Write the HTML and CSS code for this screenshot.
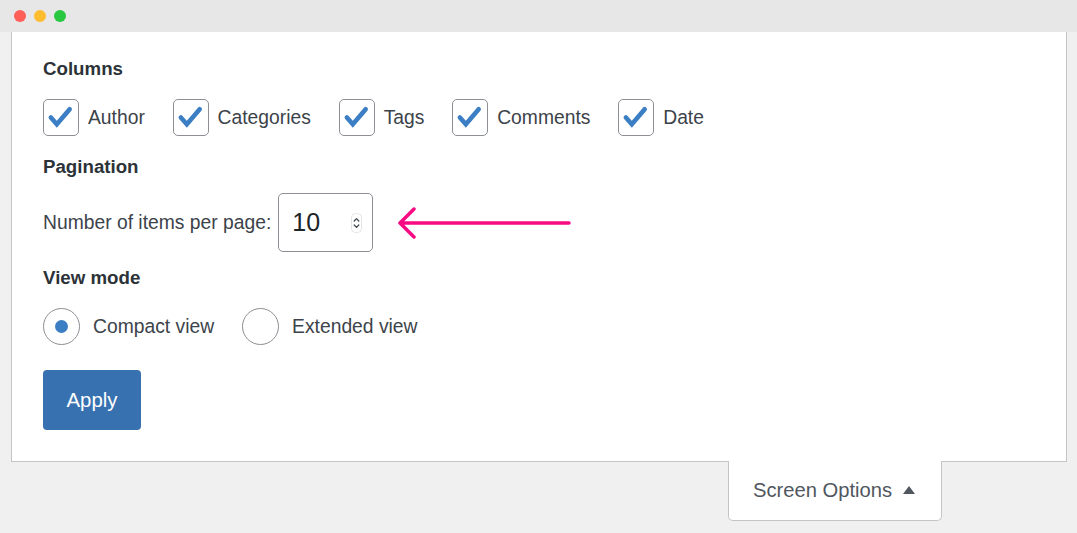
FILE: index.html
```html
<!DOCTYPE html>
<html lang="en">
<head>
<meta charset="utf-8">
<title>Screen Options</title>
<link rel="stylesheet" href="styles.css">
</head>
<body>
<div class="window">
  <div class="titlebar">
    <span class="dot red"></span>
    <span class="dot yellow"></span>
    <span class="dot green"></span>
  </div>
  <div class="stage">
    <div class="panel">
      <h5 class="legend">Columns</h5>
      <div class="checks">
        <label class="check"><span class="box"><svg viewBox="0 0 36 36"><path d="M7.5 18.5 L14 26 L28 9.5" /></svg></span>Author</label>
        <label class="check"><span class="box"><svg viewBox="0 0 36 36"><path d="M7.5 18.5 L14 26 L28 9.5" /></svg></span>Categories</label>
        <label class="check"><span class="box"><svg viewBox="0 0 36 36"><path d="M7.5 18.5 L14 26 L28 9.5" /></svg></span>Tags</label>
        <label class="check"><span class="box"><svg viewBox="0 0 36 36"><path d="M7.5 18.5 L14 26 L28 9.5" /></svg></span>Comments</label>
        <label class="check"><span class="box"><svg viewBox="0 0 36 36"><path d="M7.5 18.5 L14 26 L28 9.5" /></svg></span>Date</label>
      </div>
      <h5 class="legend legend-pag">Pagination</h5>
      <div class="perpage">
        <span class="perpage-label">Number of items per page:</span>
        <div class="number">
          <span class="number-value">10</span>
          <svg class="spinner" width="11" height="20" viewBox="0 0 11 20">
            <rect x="0.5" y="0.5" width="10" height="19" rx="4" fill="#fff" stroke="#e4e4e6"/>
            <path d="M3.2 8 L5.5 5.6 L7.8 8" fill="none" stroke="#3c434a" stroke-width="1.2" stroke-linecap="round" stroke-linejoin="round"/>
            <path d="M3.2 12 L5.5 14.4 L7.8 12" fill="none" stroke="#3c434a" stroke-width="1.2" stroke-linecap="round" stroke-linejoin="round"/>
          </svg>
        </div>
        <svg class="arrow" width="175" height="36" viewBox="0 0 175 36">
          <path d="M2 18 H171 M2 18 L16 4 M2 18 L16 32" fill="none" stroke="#f80a83" stroke-width="3.5" stroke-linecap="round" stroke-linejoin="round"/>
        </svg>
      </div>
      <h5 class="legend legend-view">View mode</h5>
      <div class="radios">
        <label class="radio"><span class="circle checked"></span>Compact view</label>
        <label class="radio"><span class="circle"></span>Extended view</label>
      </div>
      <div class="actions">
        <button class="apply" type="button">Apply</button>
      </div>
    </div>
    <div class="tabrow">
      <div class="tab">Screen Options <span class="tri"></span></div>
    </div>
  </div>
</div>
</body>
</html>
```

FILE: styles.css
```css
* { box-sizing: border-box; }

html, body {
  margin: 0;
  padding: 0;
}

body {
  background: #f0f0f1;
  font-family: "Liberation Sans", Arial, sans-serif;
  color: #3c434a;
  width: 1077px;
  height: 533px;
  overflow: hidden;
}

.window {
  display: flex;
  flex-direction: column;
  height: 533px;
}

.titlebar {
  height: 32px;
  background: #e7e7e7;
  display: flex;
  align-items: center;
  gap: 7px;
  padding-left: 14px;
  padding-bottom: 1px;
}

.dot {
  width: 12px;
  height: 12px;
  border-radius: 50%;
  display: block;
}
.dot + .dot { margin-left: 1px; }
.red { background: #fe5f57; }
.yellow { background: #febc2e; }
.green { background: #28c840; }

.stage {
  padding: 0 10px 0 11px;
  display: flex;
  flex-direction: column;
}

.panel {
  background: #fff;
  border: 1px solid #c3c4c7;
  border-top: none;
  padding: 25px 30px 31px 31px;
  height: 430px;
  display: flex;
  flex-direction: column;
  align-items: flex-start;
}

.legend {
  margin: 0;
  font-size: 18.7px;
  font-weight: 700;
  line-height: 24px;
  color: #2c3338;
}

.checks {
  display: flex;
  margin-top: 18px;
  gap: 27.8px;
}

.check {
  display: flex;
  align-items: center;
  gap: 9px;
  font-size: 19.3px;
  line-height: 37px;
}

.box {
  width: 36px;
  height: 37px;
  border: 1.5px solid #8c8f94;
  border-radius: 5px;
  background: #fff;
  display: block;
}

.box svg {
  width: 33px;
  height: 34px;
  display: block;
}

.box svg path {
  fill: none;
  stroke: #3b7ec4;
  stroke-width: 5;
  stroke-linecap: round;
  stroke-linejoin: miter;
}

.legend-pag { margin-top: 19px; }

.perpage {
  display: flex;
  align-items: center;
  margin-top: 14px;
}

.perpage-label {
  font-size: 19.3px;
  margin-right: 7px;
}

.number {
  width: 95px;
  height: 59px;
  border: 1px solid #8c8f94;
  border-radius: 5px;
  display: flex;
  align-items: center;
  justify-content: space-between;
  padding: 0 10px 0 13px;
}

.number-value {
  font-size: 25px;
  color: #1d2327;
}

.spinner { display: block; }

.arrow {
  display: block;
  margin-left: 25px;
}

.legend-view { margin-top: 14px; }

.radios {
  display: flex;
  margin-top: 18px;
  gap: 28px;
}

.radio {
  display: flex;
  align-items: center;
  gap: 13px;
  font-size: 19.3px;
}

.circle {
  width: 37px;
  height: 37px;
  border-radius: 50%;
  border: 1.5px solid #8c8f94;
  display: flex;
  align-items: center;
  justify-content: center;
}

.circle.checked::after {
  content: "";
  width: 13px;
  height: 13px;
  border-radius: 50%;
  background: #3b7ec4;
}

.actions { margin-top: 25px; }

.apply {
  width: 98px;
  height: 60px;
  border: none;
  border-radius: 4px;
  background: #3871af;
  color: #fff;
  font-family: "Liberation Sans", Arial, sans-serif;
  font-size: 20.4px;
  padding: 0;
  cursor: pointer;
}

.tabrow {
  display: flex;
  justify-content: flex-end;
  padding-right: 125px;
  margin-top: -1px;
}

.tab {
  width: 214px;
  height: 60px;
  background: #fff;
  border: 1px solid #c3c4c7;
  border-top: none;
  border-radius: 0 0 5px 5px;
  display: flex;
  align-items: center;
  justify-content: flex-start;
  gap: 11px;
  font-size: 20.2px;
  color: #50575e;
  padding-left: 24px;
}

.tri {
  width: 0;
  height: 0;
  border-left: 6px solid transparent;
  border-right: 6px solid transparent;
  border-bottom: 8px solid #50575e;
  margin-top: -2px;
}
```
